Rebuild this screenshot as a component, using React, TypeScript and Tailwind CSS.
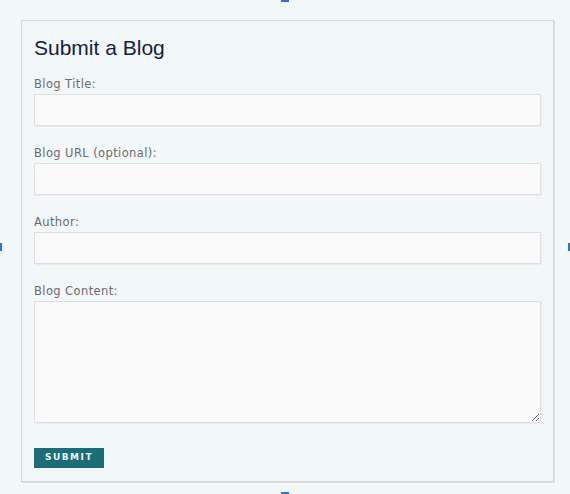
import React from "react";

const labelCls =
  "block text-[11.5px] leading-[15px] tracking-[0.4px] text-[#6b6b6b] [font-family:'DejaVu_Sans',sans-serif]";
const fieldCls =
  "block w-full bg-[#fafafa] border border-[#e0e0e0] shadow-[1px_1px_0_#ececec] outline-none";

function Field({ label, area }: { label: string; area?: boolean }) {
  return (
    <div className="flex flex-col gap-[2px]">
      <label className={labelCls}>{label}</label>
      {area ? (
        <textarea className={`${fieldCls} h-[122px] resize-y`} />
      ) : (
        <input type="text" className={`${fieldCls} h-[32px]`} />
      )}
    </div>
  );
}

export default function App() {
  return (
    <div className="relative w-[570px] h-[494px] bg-[#f2f7fa] pt-[20px] pl-[21px] overflow-hidden">
      <div className="flex flex-col w-[533px] h-[462px] border border-[#d6d6d6] shadow-[1px_1px_0_#e4e4e4] px-[12px] pt-[13px]">
        <h2 className="text-[21px] leading-[27px] text-[#14213d] mb-[16px] [font-family:'Liberation_Sans',Arial,sans-serif]">
          Submit a Blog
        </h2>
        <form
          className="flex flex-col gap-[20px]"
          onSubmit={(e) => e.preventDefault()}
        >
          <Field label="Blog Title:" />
          <Field label="Blog URL (optional):" />
          <Field label="Author:" />
          <Field label="Blog Content:" area />
          <button
            type="submit"
            className="mt-[5px] w-[70px] h-[20px] bg-[#1c6d78] text-[#eef4f5] text-[9px] font-bold tracking-[1.5px] [font-family:'DejaVu_Sans',sans-serif]"
          >
            SUBMIT
          </button>
        </form>
      </div>

      {/* selection handles */}
      <div className="absolute top-0 left-[281px] w-[8px] h-[2px] bg-[#2f6fe0]" />
      <div className="absolute bottom-0 left-[281px] w-[8px] h-[2px] bg-[#2f6fe0]" />
      <div className="absolute left-0 top-[243px] w-[2px] h-[8px] bg-[#2f6fe0]" />
      <div className="absolute right-0 top-[243px] w-[2px] h-[8px] bg-[#2f6fe0]" />
    </div>
  );
}
